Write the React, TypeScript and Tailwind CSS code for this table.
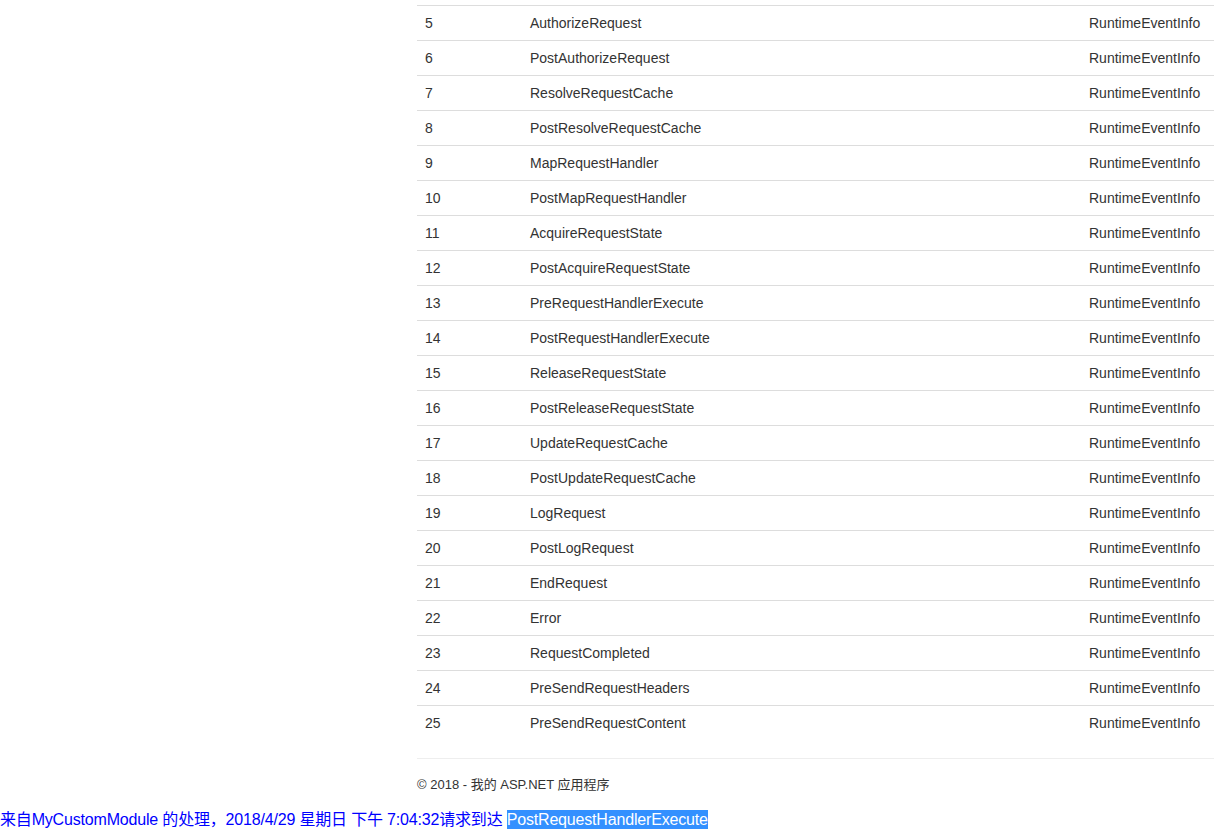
import React from "react";

const rows: [number, string][] = [
  [5, "AuthorizeRequest"],
  [6, "PostAuthorizeRequest"],
  [7, "ResolveRequestCache"],
  [8, "PostResolveRequestCache"],
  [9, "MapRequestHandler"],
  [10, "PostMapRequestHandler"],
  [11, "AcquireRequestState"],
  [12, "PostAcquireRequestState"],
  [13, "PreRequestHandlerExecute"],
  [14, "PostRequestHandlerExecute"],
  [15, "ReleaseRequestState"],
  [16, "PostReleaseRequestState"],
  [17, "UpdateRequestCache"],
  [18, "PostUpdateRequestCache"],
  [19, "LogRequest"],
  [20, "PostLogRequest"],
  [21, "EndRequest"],
  [22, "Error"],
  [23, "RequestCompleted"],
  [24, "PreSendRequestHeaders"],
  [25, "PreSendRequestContent"],
];

export default function App() {
  return (
    <div
      className="w-[1214px] h-[837px] overflow-hidden bg-white text-[#333]"
      style={{ fontFamily: '"Liberation Sans", Arial, "Noto Sans CJK SC", sans-serif' }}
    >
      <div className="ml-[417px] pt-[5px]">
        <div className="flex flex-col text-[14px] leading-[20px]">
          {rows.map(([n, name]) => (
            <div key={n} className="flex items-center h-[35px] border-t border-[#ddd]">
              <div className="w-[113px] pl-[8px]">{n}</div>
              <div className="flex-1">{name}</div>
              <div className="w-[125px]">RuntimeEventInfo</div>
            </div>
          ))}
        </div>
        <div className="mt-[18px] border-t border-[#eee]" />
        <div className="h-[52px] flex items-center text-[13px] leading-[18px]">
          © 2018 - 我的 ASP.NET 应用程序
        </div>
      </div>
      <div className="text-[16px] leading-[18px] tracking-[-0.18px] text-[#0000ff] whitespace-nowrap">
        来自MyCustomModule 的处理，2018/4/29 星期日 下午 7:04:32请求到达{" "}
        <span className="bg-[#3390ff] text-white py-[1px]">PostRequestHandlerExecute</span>
      </div>
    </div>
  );
}
